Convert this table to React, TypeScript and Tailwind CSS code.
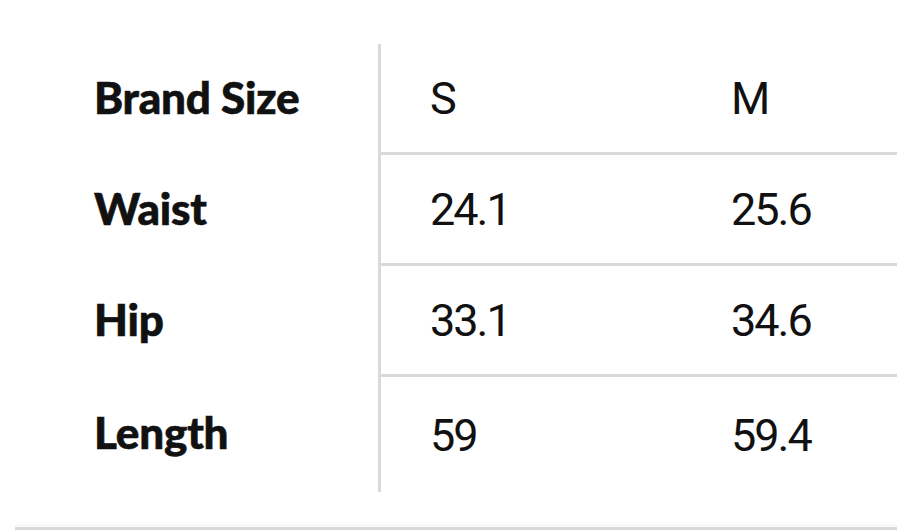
const rows = [
  { label: 'Brand Size', s: 'S', m: 'M', h: 'h-[111px]' },
  { label: 'Waist', s: '24.1', m: '25.6', h: 'h-[111px]' },
  { label: 'Hip', s: '33.1', m: '34.6', h: 'h-[111px]' },
  { label: 'Length', s: '59', m: '59.4', h: 'h-[115px]' },
];

export default function App() {
  return (
    <div className="w-[897px] h-[530px] bg-white overflow-hidden flex flex-col">
      <div className="pt-[44px]">
        {rows.map((row, i) => {
          const last = i === rows.length - 1;
          return (
            <div key={row.label} className={`flex ${row.h}`}>
              <div className="w-[378px] pl-[94px] pb-[5px] flex items-center">
                <span className="font-['Lato',sans-serif] font-black text-[44px] text-[#111] tracking-[-0.2px] [-webkit-text-stroke:0.6px_#111]">
                  {row.label}
                </span>
              </div>
              <div
                className={`flex-1 flex items-center border-l-[3px] border-[#d9d9d9] ${
                  last ? '' : 'border-b-[3px]'
                }`}
              >
                <div className="w-[350px] pl-[49px] font-['Roboto',sans-serif] text-[45px] text-[#111] tracking-[-2px] pt-[2px]">
                  {row.s}
                </div>
                <div className="font-['Roboto',sans-serif] text-[45px] text-[#111] tracking-[-2px] pt-[2px]">
                  {row.m}
                </div>
              </div>
            </div>
          );
        })}
      </div>
      <div className="mt-auto ml-[15px] border-t border-[#f3f3f3] mb-[1px]" />
      <div className="ml-[15px] h-[3px] bg-[#d9d9d9]" />
    </div>
  );
}
